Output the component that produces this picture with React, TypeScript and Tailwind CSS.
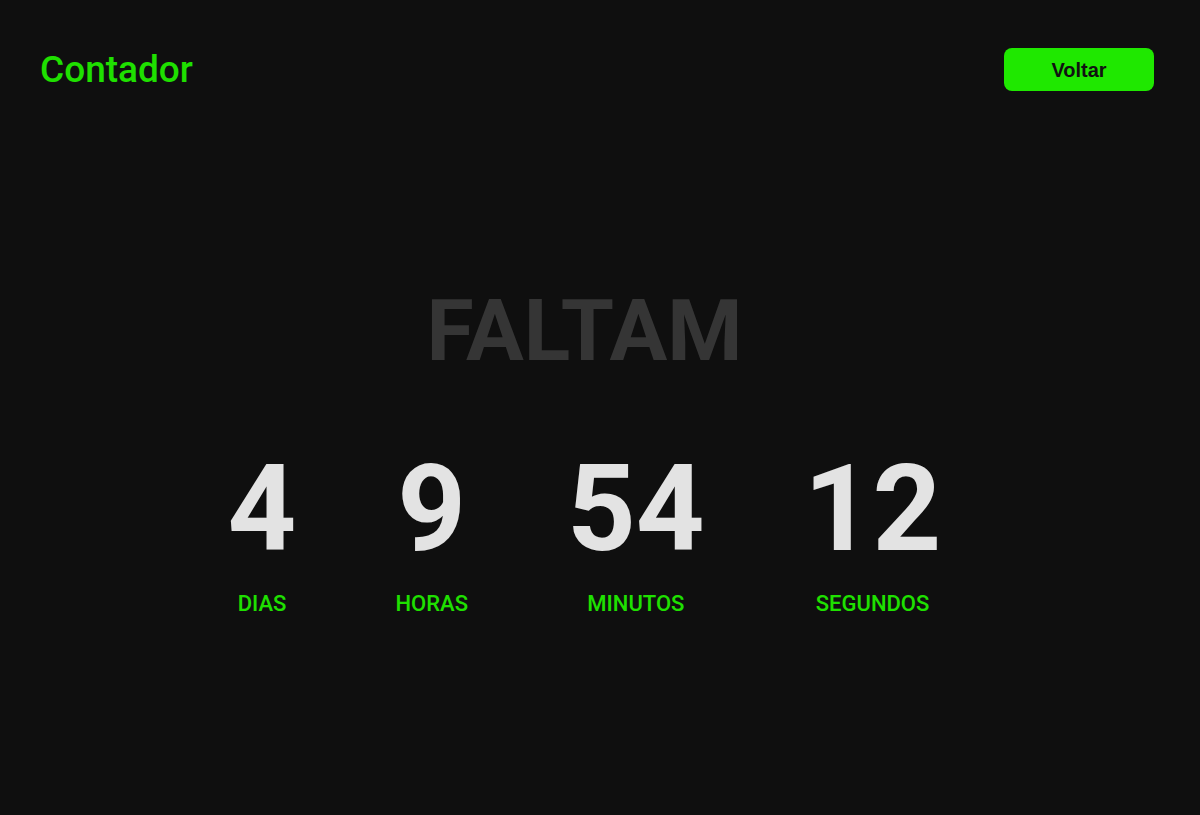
export default function App() {
  const units = [
    { value: "4", label: "DIAS" },
    { value: "9", label: "HORAS" },
    { value: "54", label: "MINUTOS" },
    { value: "12", label: "SEGUNDOS" },
  ];

  return (
    <div className="min-h-[815px] bg-[#0f0f0f] font-['Roboto',sans-serif]">
      <header className="flex items-center justify-between pl-[40px] pr-[46px] pt-[48px]">
        <h1 className="text-[37px] font-medium leading-none text-[#1fe000]">Contador</h1>
        <button className="h-[43px] w-[150px] rounded-lg bg-[#1fe800] font-['Liberation_Sans',Arial,sans-serif] text-[20px] font-bold text-[#111]">
          Voltar
        </button>
      </header>

      <main className="flex flex-col items-center pr-[31px] pt-[197px]">
        <h2 className="text-[86px] font-bold leading-none text-[#353535]">FALTAM</h2>
        <div className="mt-[75px] flex gap-[99px]">
          {units.map((u) => (
            <div key={u.label} className="flex flex-col items-center">
              <span className="text-[120px] font-bold leading-none text-[#e3e3e3]">{u.value}</span>
              <span className="mt-[24px] text-[22px] font-medium leading-none text-[#1fe000]">{u.label}</span>
            </div>
          ))}
        </div>
      </main>
    </div>
  );
}
